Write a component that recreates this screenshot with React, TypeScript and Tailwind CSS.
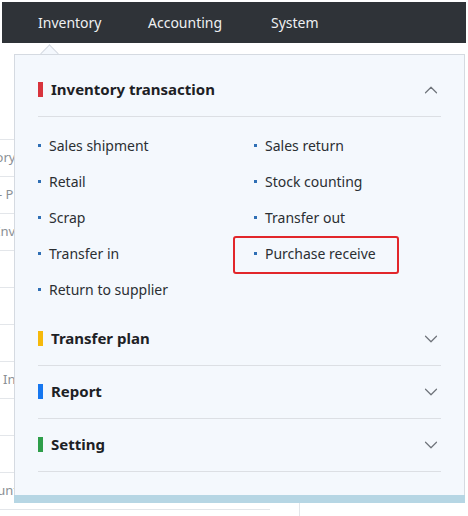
import { ChevronDown, ChevronUp } from "lucide-react";

const FONT = { fontFamily: '"Noto Sans", "Open Sans", sans-serif' };

const LEFT_ITEMS = ["Sales shipment", "Retail", "Scrap", "Transfer in", "Return to supplier"];
const RIGHT_ITEMS = ["Sales return", "Stock counting", "Transfer out", "Purchase receive"];

// fragments of the page table peeking out left of the dropdown
const BG_ROWS: { text: string; shift: string }[] = [
  { text: "Category", shift: "-ml-[40px]" },
  { text: "- P", shift: "-ml-[2px]" },
  { text: "Inventory", shift: "-ml-[4px]" },
  { text: "", shift: "" },
  { text: "", shift: "" },
  { text: "", shift: "" },
  { text: "In", shift: "ml-[3px]" },
  { text: "", shift: "" },
  { text: "", shift: "" },
  { text: "Amount", shift: "-ml-[31px]" },
];

function Bullet() {
  return <span className="inline-block size-[3px] shrink-0 bg-[#2f6fb5]" />;
}

function MenuItem({ label }: { label: string }) {
  return (
    <div className="flex h-[36px] items-center gap-[8px]">
      <Bullet />
      <span className="text-[14px] text-[#2b2f33]">{label}</span>
    </div>
  );
}

function SectionHeader({
  title,
  color,
  open,
}: {
  title: string;
  color: string;
  open?: boolean;
}) {
  return (
    <div className="flex h-[53px] items-center border-b border-[#dcdfe4] pb-px">
      <span className={`h-[15px] w-[5px] ${color}`} />
      <span className="ml-[8px] text-[15px] font-bold text-[#1d2125]">{title}</span>
      <span className="ml-auto mr-[-1px] text-[#6e737a]">
        {open ? (
          <ChevronUp size={22} strokeWidth={1.3} />
        ) : (
          <ChevronDown size={22} strokeWidth={1.3} />
        )}
      </span>
    </div>
  );
}

export default function App() {
  return (
    <div className="relative h-[516px] w-[468px] overflow-hidden bg-white" style={FONT}>
      {/* top nav */}
      <div className="px-[2px] pt-[2px]">
        <nav className="flex h-[41px] items-center bg-[#2f3338] pl-[36px] text-[14px] text-[#eef0f2]">
          <span className="w-[110px]">Inventory</span>
          <span className="w-[123px]">Accounting</span>
          <span>System</span>
        </nav>
      </div>

      {/* page content behind the dropdown */}
      <div className="mt-[96px] w-[14px] overflow-hidden text-[13px] text-[#8a8f95]">
        {BG_ROWS.map((r, i) => (
          <div
            key={i}
            className="flex h-[37px] items-center whitespace-nowrap border-t border-[#e3e6ea]"
          >
            <span className={r.shift}>{r.text}</span>
          </div>
        ))}
      </div>
      <div className="absolute left-0 top-[509px] h-px w-[270px] bg-[#e3e6ea]" />
      <div className="absolute left-[299px] top-[503px] h-[13px] w-px bg-[#e3e6ea]" />

      {/* dropdown panel */}
      <div className="absolute left-[14px] top-[54px] w-[451px]">
        <div className="absolute left-[29px] top-[-7px] size-[13px] rotate-45 border-l border-t border-[#d5dae1] bg-[#f4f8fd]" />
        <div className="relative border-x border-t border-[#d5dae1] bg-[#f4f8fd] px-[23px] pt-[9px] pb-[23px]">
          <SectionHeader title="Inventory transaction" color="bg-[#d8343d]" open />
          <div className="grid grid-cols-[216px_1fr] pt-[10px] pb-[6px]">
            <div className="flex flex-col">
              {LEFT_ITEMS.map((l) => (
                <MenuItem key={l} label={l} />
              ))}
            </div>
            <div className="flex flex-col">
              {RIGHT_ITEMS.map((l) => (
                <MenuItem key={l} label={l} />
              ))}
            </div>
          </div>
          <SectionHeader title="Transfer plan" color="bg-[#f6b90b]" />
          <SectionHeader title="Report" color="bg-[#1677f0]" />
          <SectionHeader title="Setting" color="bg-[#2e9e4a]" />
        </div>
        <div className="h-[8px] bg-[#b6d6e4]" />
        {/* highlight annotation */}
        <div className="absolute left-[219px] top-[182px] h-[38px] w-[166px] rounded-[3px] border-2 border-[#e2262b]" />
      </div>
    </div>
  );
}
